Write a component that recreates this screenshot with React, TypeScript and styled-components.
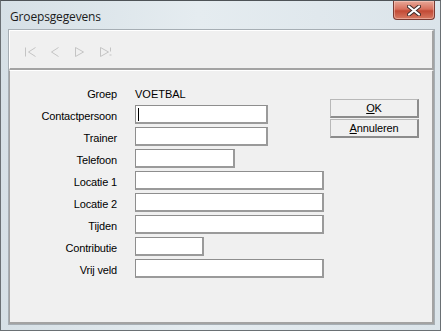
import React from "react";
import styled, { createGlobalStyle } from "styled-components";

const Global = createGlobalStyle`
  html, body { margin: 0; padding: 0; background: #dfe7ec; }
  * { box-sizing: border-box; }
`;

const Window = styled.div`
  width: 441px;
  height: 331px;
  display: flex;
  flex-direction: column;
  border: 1px solid #6a7074;
  border-top-color: #4e5357;
  background: linear-gradient(to right, #d6e0e6 0%, #e5ecf0 45%, #dbe4ea 100%);
  font-family: "Liberation Sans", Arial, sans-serif;
`;

const TitleBar = styled.div`
  height: 28px;
  display: flex;
  align-items: flex-start;
  justify-content: space-between;
  padding-left: 9px;
  padding-right: 5px;
`;

const Title = styled.div`
  font-family: "Open Sans", "Noto Sans", sans-serif;
  font-size: 12px;
  color: #1b1b1b;
  line-height: 28px;
  letter-spacing: -0.15px;
  padding-top: 2px;
`;

const CloseButton = styled.div`
  width: 42px;
  height: 19px;
  display: flex;
  align-items: center;
  justify-content: center;
  border: 1px solid #7a3a32;
  border-top: none;
  border-radius: 0 0 4px 4px;
  background: linear-gradient(to bottom, #e8a898 0%, #d8705d 45%, #c24a35 55%, #d77a63 100%);
  box-shadow: inset 0 0 0 1px rgba(255, 220, 210, 0.45);
`;

const Client = styled.div`
  flex: 1;
  margin: 0 5px 5px 7px;
  display: flex;
  flex-direction: column;
  background: #f0f0f0;
  border: 1px solid #a6aeb4;
`;

const Toolbar = styled.div`
  height: 40px;
  display: flex;
  align-items: center;
  padding: 4px 0 0 8px;
  border-right: 2px solid #a3a3a3;
  border-bottom: 2px solid #a3a3a3;
  border-left: 1px solid #ffffff;
  border-top: 1px solid #ffffff;
`;

const NavButton = styled.div`
  width: 25px;
  height: 22px;
  display: flex;
  align-items: center;
  justify-content: center;
`;

const Panel = styled.div`
  flex: 1;
  display: flex;
  align-items: flex-start;
  border-left: 1px solid #a3a3a3;
  border-top: 1px solid #ffffff;
  border-right: 2px solid #a3a3a3;
  border-bottom: 2px solid #a3a3a3;
`;

const Form = styled.div`
  width: 320px;
  padding-top: 11px;
  display: flex;
  flex-direction: column;
`;

const Row = styled.div`
  height: 22px;
  display: flex;
  align-items: flex-start;
`;

const Label = styled.div`
  width: 107px;
  margin-right: 18px;
  text-align: right;
  font-size: 11px;
  line-height: 24px;
  color: #000;
  letter-spacing: -0.15px;
`;

const Value = styled.div`
  font-size: 11px;
  line-height: 24px;
  color: #000;
`;

const Field = styled.div<{ $w: number }>`
  width: ${(p) => p.$w}px;
  height: 19px;
  margin-top: 1px;
  background: #ffffff;
  border: 1px solid #a8a8a8;
  border-right: 2px solid #9a9a9a;
  border-bottom: 2px solid #9a9a9a;
  border-left-color: #8e8e8e;
  border-top-color: #8e8e8e;
  position: relative;
`;

const Caret = styled.span`
  position: absolute;
  left: 2px;
  top: 2px;
  width: 1px;
  height: 13px;
  background: #000;
`;

const ButtonColumn = styled.div`
  margin-top: 28px;
  display: flex;
  flex-direction: column;
  gap: 1px;
`;

const Button = styled.div`
  width: 89px;
  height: 19px;
  display: flex;
  align-items: center;
  justify-content: center;
  background: #f0f0f0;
  border: 1px solid #b8b8b8;
  border-right: 2px solid #8c8c8c;
  border-bottom: 2px solid #8c8c8c;
  font-size: 11px;
  color: #000;
  letter-spacing: -0.15px;
  u { text-decoration: underline; }
`;

function NavIcon({ kind }: { kind: number }) {
  const c = "#c4c4c4";
  const paths: Record<number, React.ReactNode> = {
    0: (
      <>
        <path d="M1.5 0.5 V9.5" stroke={c} />
        <path d="M11.5 0.5 L4.5 5 L11.5 9.5" stroke={c} fill="none" />
      </>
    ),
    1: <path d="M9.5 0.5 L2.5 5 L9.5 9.5" stroke={c} fill="none" />,
    2: <path d="M1.5 0.5 V9.5 L9.5 5 Z" stroke={c} fill="none" />,
    3: (
      <>
        <path d="M1.5 0.5 V9.5 L9.5 5 Z" stroke={c} fill="none" />
        <path d="M11.5 0.5 V4.5" stroke={c} />
        <path d="M10.5 8 L12.5 8" stroke={c} />
      </>
    ),
  };
  return (
    <svg width="13" height="10" viewBox="0 0 13 10">
      {paths[kind]}
    </svg>
  );
}

const fields: { label: string; w?: number; caret?: boolean; value?: string }[] = [
  { label: "Groep", value: "VOETBAL" },
  { label: "Contactpersoon", w: 133, caret: true },
  { label: "Trainer", w: 133 },
  { label: "Telefoon", w: 100 },
  { label: "Locatie 1", w: 189 },
  { label: "Locatie 2", w: 189 },
  { label: "Tijden", w: 189 },
  { label: "Contributie", w: 69 },
  { label: "Vrij veld", w: 189 },
];

export default function App() {
  return (
    <>
      <Global />
      <Window>
        <TitleBar>
          <Title>Groepsgegevens</Title>
          <CloseButton>
            <svg width="14" height="11" viewBox="0 0 14 11">
              <path
                d="M2 1.5 L12 9.5 M12 1.5 L2 9.5"
                stroke="#3d2a28"
                strokeWidth="4"
                strokeLinecap="round"
              />
              <path
                d="M2 1.5 L12 9.5 M12 1.5 L2 9.5"
                stroke="#ffffff"
                strokeWidth="2.2"
                strokeLinecap="round"
              />
            </svg>
          </CloseButton>
        </TitleBar>
        <Client>
          <Toolbar>
            {[0, 1, 2, 3].map((k) => (
              <NavButton key={k}>
                <NavIcon kind={k} />
              </NavButton>
            ))}
          </Toolbar>
          <Panel>
            <Form>
              {fields.map((f) => (
                <Row key={f.label}>
                  <Label>{f.label}</Label>
                  {f.value ? (
                    <Value>{f.value}</Value>
                  ) : (
                    <Field $w={f.w || 100}>{f.caret && <Caret />}</Field>
                  )}
                </Row>
              ))}
            </Form>
            <ButtonColumn>
              <Button>
                <u>O</u>K
              </Button>
              <Button>
                <u>A</u>nnuleren
              </Button>
            </ButtonColumn>
          </Panel>
        </Client>
      </Window>
    </>
  );
}
